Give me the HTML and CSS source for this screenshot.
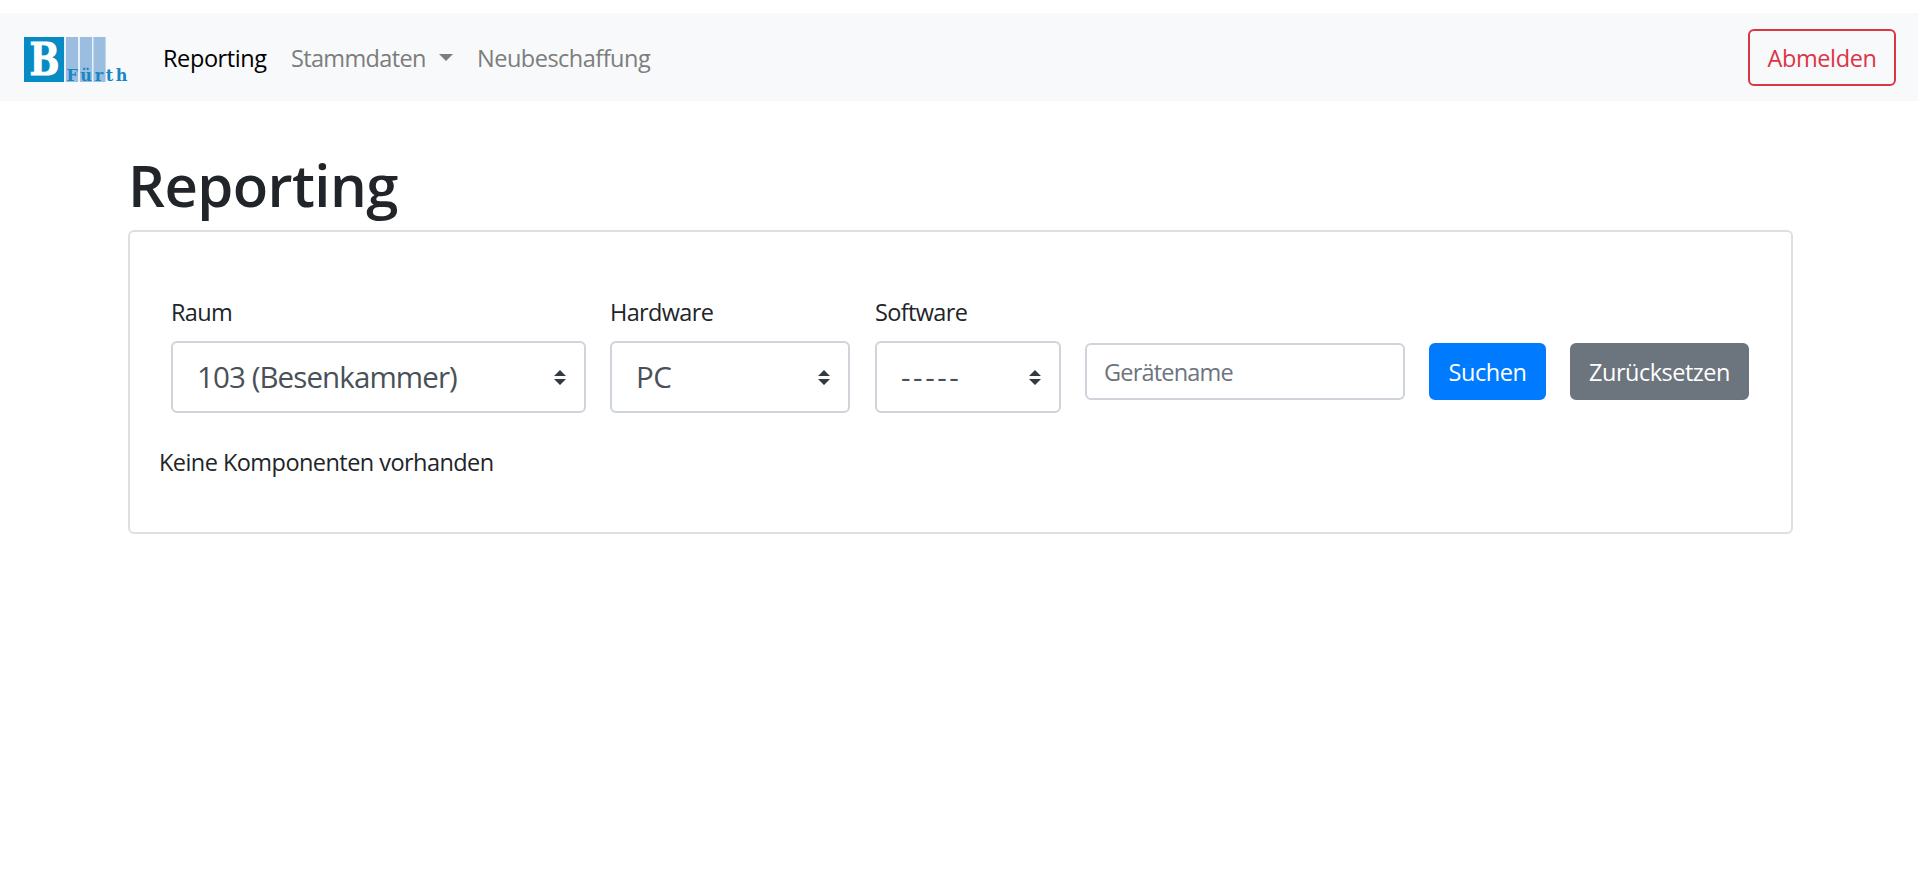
FILE: index.html
```html
<!DOCTYPE html>
<html lang="de">
<head>
<meta charset="utf-8">
<title>Reporting</title>
<link rel="stylesheet" href="styles.css">
</head>
<body>
<nav class="navbar">
  <svg class="logo" width="106" height="50" viewBox="0 0 106 50">
    <rect width="40" height="45" fill="#068bc4"/>
    <rect x="40" width="42" height="45" fill="#e9f1f8"/>
    <rect x="42" width="12" height="45" fill="#9abde0"/>
    <rect x="56" width="12" height="45" fill="#9abde0"/>
    <rect x="69.500" width="12" height="45" fill="#9abde0"/>
    <text class="logo-letter" x="5.500" y="38.200" textLength="30" lengthAdjust="spacingAndGlyphs">B</text>
    <text class="logo-city" x="42.500" y="44.300" textLength="61">Fürth</text>
  </svg>
  <a class="nav-link active">Reporting</a>
  <a class="nav-link stamm">Stammdaten<span class="caret"></span></a>
  <a class="nav-link neu">Neubeschaffung</a>
  <button class="btn btn-logout">Abmelden</button>
</nav>
<main class="container">
  <h1 class="title">Reporting</h1>
  <section class="card">
    <form class="filters">
      <div class="field room">
        <label class="label">Raum</label>
        <div class="select">103 (Besenkammer)<svg class="arrows" width="12" height="15" viewBox="0 0 4 5"><path fill="#343a40" d="M2 0L0 2h4zm0 5L0 3h4z"/></svg></div>
      </div>
      <div class="field hardware">
        <label class="label">Hardware</label>
        <div class="select"><span class="pc">PC</span><svg class="arrows" width="12" height="15" viewBox="0 0 4 5"><path fill="#343a40" d="M2 0L0 2h4zm0 5L0 3h4z"/></svg></div>
      </div>
      <div class="field software">
        <label class="label">Software</label>
        <div class="select"><span class="dashes">-----</span><svg class="arrows" width="12" height="15" viewBox="0 0 4 5"><path fill="#343a40" d="M2 0L0 2h4zm0 5L0 3h4z"/></svg></div>
      </div>
      <input class="input" type="text" placeholder="Gerätename">
      <button class="btn btn-search" type="button">Suchen</button>
      <button class="btn btn-reset" type="button">Zurücksetzen</button>
    </form>
    <p class="empty">Keine Komponenten vorhanden</p>
  </section>
</main>
</body>
</html>
```
FILE: styles.css
```css
* { box-sizing: border-box; }
body {
  margin: 0;
  padding-top: 13px;
  background: #fff;
  color: #212529;
  font: 23.5px/36px "Open Sans", "Noto Sans", sans-serif;
  letter-spacing: -0.55px;
}
.navbar {
  display: flex;
  align-items: center;
  height: 88px;
  padding: 0 22px 0 24px;
  background: #f8f9fa;
}
.logo { display: block; flex: none; overflow: visible; margin-right: 33px; margin-top: 9px; }
.logo-letter { font: bold 44px/1 "DejaVu Serif", serif; fill: #fff; stroke: #fff; stroke-width: 1; letter-spacing: 0; }
.logo-city { font: bold 16px/1 "DejaVu Serif", serif; fill: #1786c4; letter-spacing: 0; }
.nav-link { padding-top: 2px; white-space: nowrap; }
.nav-link.active { width: 128px; color: #000; letter-spacing: -0.4px; }
.nav-link.stamm { display: flex; align-items: center; width: 186px; color: #7c7d7d; letter-spacing: -0.65px; }
.nav-link.neu { color: #7c7d7d; letter-spacing: -0.5px; }
.caret {
  margin-left: 13px;
  margin-top: -1px;
  border: 7px solid transparent;
  border-top-color: #7c7d7d;
  border-bottom: 0;
}
.btn {
  height: 57px;
  padding: 2px 0 0;
  border: 2px solid;
  border-radius: 6px;
  font: inherit;
  letter-spacing: -0.4px;
  white-space: nowrap;
}
.btn-logout { width: 148px; margin-left: auto; border-color: #dc3545; background: transparent; color: #dc3545; }
.container { width: 1665px; margin-left: 128px; padding-top: 48px; }
.title { margin: 0 0 9px; font-size: 58px; line-height: 72px; font-weight: 600; letter-spacing: -0.6px; }
.card { height: 304px; padding: 62px 29px 0; border: 2px solid #dfdfdf; border-radius: 6px; }
.filters { display: flex; gap: 24px; padding-left: 12px; }
.label { display: block; margin-bottom: 11px; letter-spacing: -0.65px; }
.select {
  display: flex;
  align-items: center;
  justify-content: space-between;
  height: 72px;
  padding: 0 18px 0 24px;
  border: 2px solid #ced4da;
  border-radius: 6px;
  color: #495057;
  font-size: 29.5px;
  letter-spacing: -0.9px;
}
.pc { letter-spacing: -0.5px; }
.dashes { letter-spacing: 2.6px; }
.room { width: 415px; }
.hardware { width: 240px; margin-right: 1px; }
.software { width: 186px; }
.input {
  width: 320px;
  height: 57px;
  margin-top: 49px;
  padding: 0 17px;
  border: 2px solid #ced4da;
  border-radius: 6px;
  font: inherit;
  letter-spacing: -0.8px;
}
.input::placeholder { color: #6c757d; opacity: 1; }
.btn-search, .btn-reset { margin-top: 49px; padding-top: 0; color: #fff; }
.btn-search { width: 117px; border-color: #007bff; background: #007bff; }
.btn-reset { width: 179px; border-color: #6c757d; background: #6c757d; letter-spacing: -0.5px; }
.empty { margin: 31px 0 0; }
```
